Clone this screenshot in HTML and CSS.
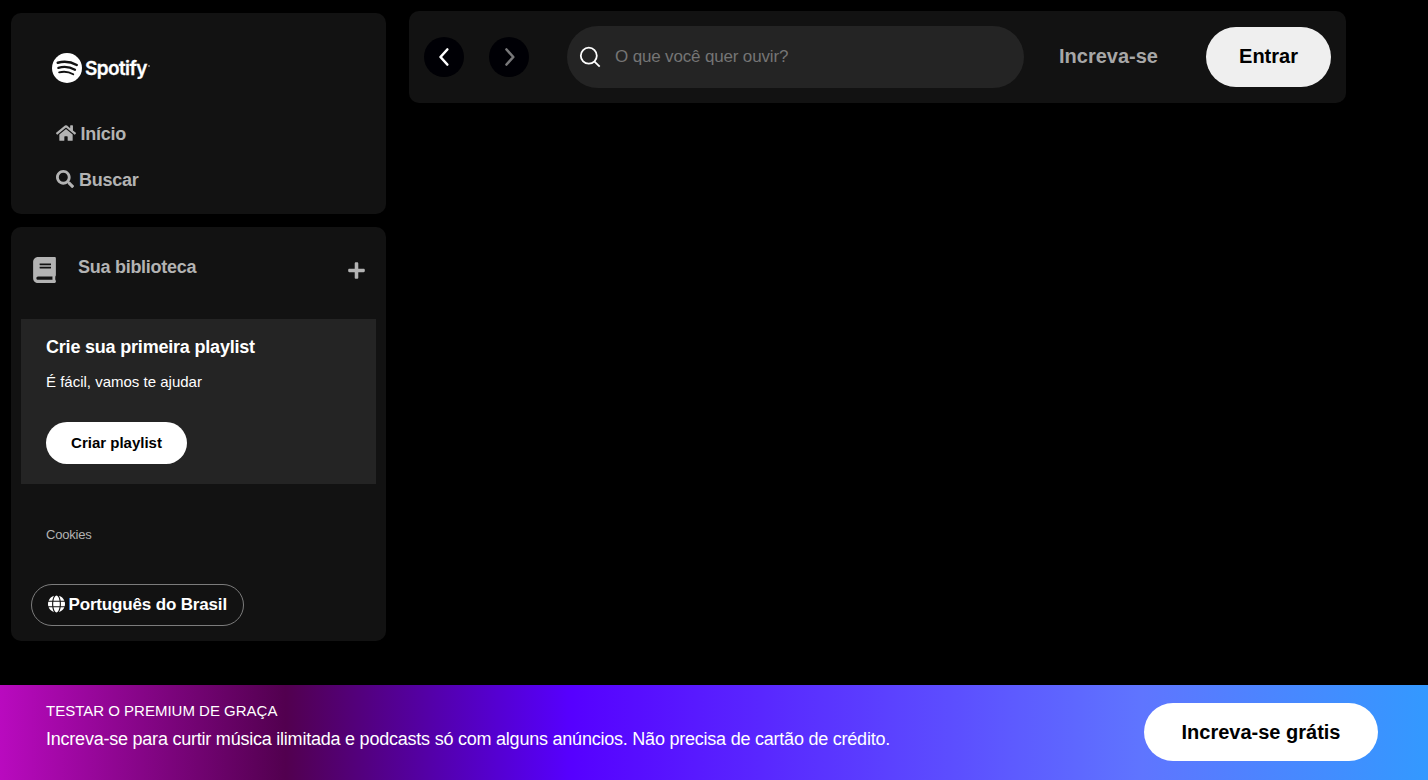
FILE: index.html
```html
<!DOCTYPE html>
<html lang="pt-BR">
<head>
<meta charset="utf-8">
<title>Spotify</title>
<link rel="stylesheet" href="styles.css">
</head>
<body>
<div class="page">
  <div class="main">
    <aside class="sidebar">
      <nav class="panel menu">
        <a class="brand">
          <svg class="brand-mark" viewBox="0 0 24 24"><circle cx="12" cy="12" r="12" fill="#fff"/><g fill="none" stroke="#121212" stroke-linecap="round"><path d="M4.600 7.800C9.400 6.600 15.200 7.100 19.800 9.600" stroke-width="2"/><path d="M5.100 11.900C9.400 10.700 14.400 11.200 18.400 13.400" stroke-width="1.800"/><path d="M5.700 15.500C9.500 14.500 13.500 15 17 17" stroke-width="1.500"/></g></svg>
          <span class="brand-name">Spotify</span><span class="brand-dot"></span>
        </a>
        <a class="menu-link"><svg class="icon-home" viewBox="0 0 576 512"><path d="M280.37 148.26L96 300.11V464a16 16 0 0 0 16 16l112.06-.29a16 16 0 0 0 15.92-16V368a16 16 0 0 1 16-16h64a16 16 0 0 1 16 16v95.64a16 16 0 0 0 16 16.05L464 480a16 16 0 0 0 16-16V300L295.67 148.26a12.19 12.19 0 0 0-15.3 0zM571.6 251.47L488 182.56V44.05a12 12 0 0 0-12-12h-56a12 12 0 0 0-12 12v72.61L318.47 43a48 48 0 0 0-61 0L4.34 251.47a12 12 0 0 0-1.6 16.9l25.5 31A12 12 0 0 0 45.15 301l235.22-193.74a12.19 12.19 0 0 1 15.3 0L530.9 301a12 12 0 0 0 16.9-1.6l25.5-31a12 12 0 0 0-1.7-16.93z"/></svg><span>Início</span></a>
        <a class="menu-link"><svg class="icon-search" viewBox="0 0 512 512"><path d="M505 442.7L405.3 343c-4.500-4.500-10.600-7-17-7H372c27.600-35.300 44-79.700 44-128C416 93.100 322.900 0 208 0S0 93.100 0 208s93.100 208 208 208c48.300 0 92.700-16.400 128-44v16.300c0 6.400 2.500 12.500 7 17l99.700 99.700c9.400 9.400 24.600 9.400 33.900 0l28.300-28.300c9.400-9.400 9.400-24.600.1-34zM208 336c-70.700 0-128-57.200-128-128 0-70.700 57.200-128 128-128 70.700 0 128 57.200 128 128 0 70.700-57.200 128-128 128z"/></svg><span>Buscar</span></a>
      </nav>
      <section class="panel library">
        <header class="library-head">
          <svg class="icon-book" viewBox="0 0 448 512"><path d="M448 360V24c0-13.300-10.700-24-24-24H96C43 0 0 43 0 96v320c0 53 43 96 96 96h328c13.300 0 24-10.700 24-24v-16c0-7.500-3.500-14.300-8.900-18.700-4.200-15.400-4.200-59.300 0-74.700 5.400-4.300 8.900-11.100 8.900-18.600zM128 134c0-3.300 2.700-6 6-6h212c3.300 0 6 2.700 6 6v20c0 3.300-2.700 6-6 6H134c-3.300 0-6-2.700-6-6v-20zm0 64c0-3.300 2.700-6 6-6h212c3.300 0 6 2.700 6 6v20c0 3.300-2.700 6-6 6H134c-3.300 0-6-2.700-6-6v-20zm253.400 250H96c-17.700 0-32-14.300-32-32 0-17.600 14.400-32 32-32h285.400c-1.900 17.100-1.900 46.900 0 64z"/></svg>
          <span class="library-title">Sua biblioteca</span>
          <svg class="icon-plus" viewBox="0 0 448 512"><path d="M416 208H272V64c0-17.670-14.330-32-32-32h-32c-17.670 0-32 14.330-32 32v144H32c-17.670 0-32 14.330-32 32v32c0 17.670 14.330 32 32 32h144v144c0 17.670 14.330 32 32 32h32c17.670 0 32-14.330 32-32V304h144c17.670 0 32-14.330 32-32v-32c0-17.670-14.330-32-32-32z"/></svg>
        </header>
        <div class="playlist">
          <h2 class="playlist-title">Crie sua primeira playlist</h2>
          <p class="playlist-text">É fácil, vamos te ajudar</p>
          <button class="playlist-button">Criar playlist</button>
        </div>
        <a class="cookies">Cookies</a>
        <button class="language"><svg class="icon-globe" viewBox="0 0 496 512"><path d="M336.500 160C322 70.700 287.800 8 248 8s-74 62.700-88.500 152h177zM152 256c0 22.200 1.200 43.500 3.300 64h185.300c2.100-20.500 3.300-41.800 3.300-64s-1.200-43.500-3.300-64H155.300c-2.100 20.500-3.300 41.800-3.300 64zm324.700-96c-28.600-67.900-86.500-120.400-158-141.600 24.400 33.800 41.200 84.700 50 141.600h108zM177.200 18.400C105.800 39.600 47.800 92.100 19.300 160h108c8.700-56.900 25.500-107.800 49.900-141.600zM487.400 192H372.700c2.100 21 3.300 42.500 3.300 64s-1.200 43-3.300 64h114.600c5.500-20.500 8.600-41.800 8.600-64s-3.100-43.500-8.500-64zM120 256c0-21.500 1.200-43 3.300-64H8.600C3.200 212.500 0 233.800 0 256s3.200 43.500 8.600 64h114.600c-2-21-3.200-42.500-3.200-64zm39.500 96c14.500 89.300 48.700 152 88.500 152s74-62.700 88.500-152h-177zm159.300 141.600c71.400-21.200 129.400-73.700 158-141.600h-108c-8.800 56.900-25.600 107.800-50 141.600zM19.300 352c28.600 67.900 86.500 120.400 158 141.600-24.400-33.800-41.200-84.700-50-141.600h-108z"/></svg><span>Português do Brasil</span></button>
      </section>
    </aside>
    <header class="topbar">
      <button class="arrow"><svg viewBox="0 0 40 40"><path d="M23.300 12.500L16.500 20L23.300 27.500"/></svg></button>
      <button class="arrow arrow-next"><svg viewBox="0 0 40 40"><path d="M17.500 12.500L24.300 20L17.500 27.500"/></svg></button>
      <label class="search">
        <svg class="search-icon" viewBox="0 0 22 22"><circle cx="9.800" cy="9.700" r="8"/><path d="M15.300 15.300L20.700 20.700"/></svg>
        <input class="search-input" placeholder="O que você quer ouvir?">
      </label>
      <a class="signup">Increva-se</a>
      <button class="login">Entrar</button>
    </header>
  </div>
  <footer class="promo">
    <div class="promo-copy">
      <p class="promo-title">TESTAR O PREMIUM DE GRAÇA</p>
      <p class="promo-text">Increva-se para curtir música ilimitada e podcasts só com alguns anúncios. Não precisa de cartão de crédito.</p>
    </div>
    <button class="promo-button">Increva-se grátis</button>
  </footer>
</div>
</body>
</html>
```
FILE: styles.css
```css
* { box-sizing: border-box; margin: 0; padding: 0; }
body { background: #000; color: #fff; font-family: "Liberation Sans", Arial, sans-serif; overflow: hidden; }
button, input { font-family: inherit; border: 0; }
svg { display: block; flex: none; }
span, a, button { white-space: nowrap; }

.page { display: flex; flex-direction: column; height: 780px; }
.main { display: flex; align-items: flex-start; gap: 23px; flex: 1; padding: 11px 0 0 11px; }
.sidebar { display: flex; flex-direction: column; gap: 13px; width: 375px; padding-top: 2px; }
.panel { background: #121212; border-radius: 10px; }

.menu { height: 201px; padding: 40px 0 0 45px; }
.brand { display: flex; align-items: center; height: 30px; margin: 0 0 42px -4.500px; }
.brand-mark { width: 30px; height: 30px; }
.brand-name { margin-left: 3.500px; padding-top: 2px; font: 600 19px/30px Inter, sans-serif; letter-spacing: -0.6px; -webkit-text-stroke: 0.3px #fff; }
.brand-dot { width: 2px; height: 2px; margin: -4px 0 0 1px; border-radius: 50%; background: #888; }
.menu-link { display: flex; align-items: center; height: 18px; margin-bottom: 28px; color: #b3b3b3; font-size: 18px; font-weight: 700; letter-spacing: -0.25px; }
.menu-link svg, .library-head svg { fill: #b3b3b3; }
.icon-home { width: 20px; height: 18px; margin: -2px 4.500px 0 0; }
.icon-search { width: 18px; height: 18px; margin: -2px 5px 0 0; }

.library { height: 414px; padding: 0 10px; }
.library-head { display: flex; align-items: flex-start; height: 92px; padding: 30px 11px 0 12px; color: #b3b3b3; }
.icon-book { width: 23px; height: 26px; }
.library-title { flex: 1; margin-left: 22px; font-size: 18px; font-weight: 700; line-height: 20px; letter-spacing: -0.27px; }
.icon-plus { width: 17px; height: 19px; margin-top: 4px; }
.playlist { height: 165px; padding: 18px 25px 0; background: #242424; }
.playlist-title { font-size: 18px; line-height: 20px; letter-spacing: -0.2px; }
.playlist-text { margin-top: 16px; font-size: 15px; line-height: 18px; }
.playlist-button { width: 141px; height: 42px; margin-top: 31px; padding: 0 0 2px 0; border-radius: 21px; background: #fff; color: #000; font-size: 15px; font-weight: 700; }
.cookies { display: block; margin: 42px 0 0 25px; color: #b3b3b3; font-size: 13px; line-height: 18px; letter-spacing: -0.22px; }
.language { display: flex; align-items: center; width: 213px; height: 42px; margin: 40px 0 0 10px; padding: 0 0 1px 16px; border: 1px solid #7c7c7c; border-radius: 21px; background: none; color: #fff; font-size: 17px; font-weight: 700; letter-spacing: -0.16px; }
.icon-globe { width: 17px; height: 18px; margin: -1px 3.500px 0 0; fill: #fff; }

.topbar { display: flex; align-items: center; width: 937px; height: 92px; padding: 0 15px; border-radius: 10px; background: #121212; }
.arrow { width: 40px; height: 40px; border-radius: 50%; background: #000005; }
.arrow path { fill: none; stroke: #fff; stroke-width: 2.6; stroke-linecap: round; stroke-linejoin: round; }
.arrow-next { margin-left: 25px; }
.arrow-next path { stroke: #78787a; }
.search { display: flex; align-items: center; width: 457px; height: 62px; margin-left: 38px; padding-left: 12px; border-radius: 31px; background: #242424; }
.search-icon { width: 22px; height: 22px; fill: none; stroke: #fff; stroke-width: 1.8; }
.search-input { width: 380px; margin-left: 14px; background: none; color: #fff; font-size: 17px; line-height: 20px; letter-spacing: -0.16px; }
.search-input::placeholder { color: #757575; }
.signup { width: 147px; padding: 0 0 2px 35px; color: #a7a7a7; font-size: 20px; font-weight: 700; }
.login { width: 125px; height: 60px; margin-left: 35px; padding-bottom: 2px; border-radius: 30px; background: #efefef; color: #000; font-size: 20px; font-weight: 700; }

.promo { display: flex; justify-content: space-between; align-items: flex-start; height: 95px; padding: 17px 50px 0 46px; background: linear-gradient(90deg, #b90abf 0%, #52004f 20%, #5600ff 40%, #5f75ff 80%, #3399ff 100%); }
.promo-title { font-size: 15px; line-height: 17px; }
.promo-text { margin-top: 10px; font-size: 18px; line-height: 20px; letter-spacing: -0.226px; }
.promo-button { width: 234px; height: 58px; margin-top: 1px; border-radius: 29px; background: #fff; color: #000; font-size: 20px; font-weight: 700; }
```
